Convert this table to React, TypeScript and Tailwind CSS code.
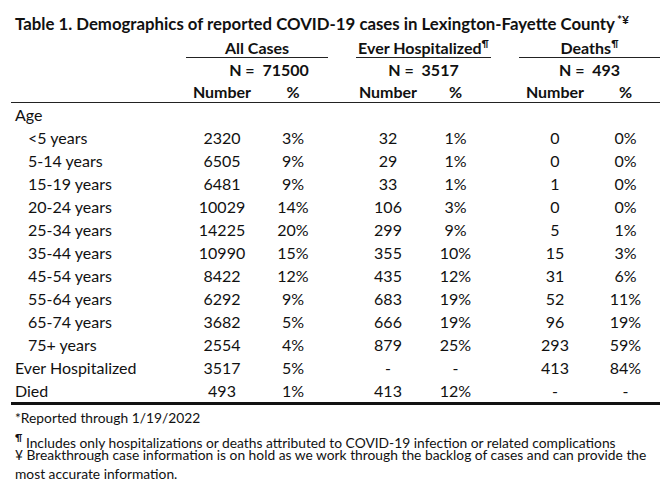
import React from "react";

type Row = {
  label: string;
  indent?: boolean;
  vals: [string, string, string, string, string, string];
};

const rows: Row[] = [
  { label: "<5 years", indent: true, vals: ["2320", "3%", "32", "1%", "0", "0%"] },
  { label: "5-14 years", indent: true, vals: ["6505", "9%", "29", "1%", "0", "0%"] },
  { label: "15-19 years", indent: true, vals: ["6481", "9%", "33", "1%", "1", "0%"] },
  { label: "20-24 years", indent: true, vals: ["10029", "14%", "106", "3%", "0", "0%"] },
  { label: "25-34 years", indent: true, vals: ["14225", "20%", "299", "9%", "5", "1%"] },
  { label: "35-44 years", indent: true, vals: ["10990", "15%", "355", "10%", "15", "3%"] },
  { label: "45-54 years", indent: true, vals: ["8422", "12%", "435", "12%", "31", "6%"] },
  { label: "55-64 years", indent: true, vals: ["6292", "9%", "683", "19%", "52", "11%"] },
  { label: "65-74 years", indent: true, vals: ["3682", "5%", "666", "19%", "96", "19%"] },
  { label: "75+ years", indent: true, vals: ["2554", "4%", "879", "25%", "293", "59%"] },
  { label: "Ever Hospitalized", vals: ["3517", "5%", "-", "-", "413", "84%"] },
  { label: "Died", vals: ["493", "1%", "413", "12%", "-", "-"] },
];

// label | all# | all% | gap | hosp# | hosp% | gap | deaths# | deaths%
const grid = "grid grid-cols-[175px_72px_70px_28px_64px_71px_28px_72px_69px]";

function Sup({ children }: { children: React.ReactNode }) {
  return (
    <span className="relative -top-[7px] text-[10px] font-bold leading-none">{children}</span>
  );
}

function DataRow({ row }: { row: Row }) {
  const [a, ap, h, hp, d, dp] = row.vals;
  return (
    <div className={`${grid} h-[23px] items-center`}>
      <div className={row.indent ? "pl-[17px]" : "pl-[4px]"}>{row.label}</div>
      <div className="text-center">{a}</div>
      <div className="text-center">{ap}</div>
      <div />
      <div className="text-center">{h}</div>
      <div className="text-center">{hp}</div>
      <div />
      <div className="text-center">{d}</div>
      <div className="text-center">{dp}</div>
    </div>
  );
}

export default function App() {
  return (
    <div className="w-[666px] h-[485px] bg-white text-[#111] font-['Lato',sans-serif] overflow-hidden">
      <div className="pl-[15px] pt-[14px] h-[38px] text-[16.8px] font-bold leading-[20px] whitespace-nowrap">
        Table 1. Demographics of reported COVID-19 cases in Lexington-Fayette County
        <span className="relative -top-[6px] ml-[2px] text-[12px] leading-none">*¥</span>
      </div>

      <div className="ml-[11px] w-[649px] text-[16px] leading-[20px]">
        {/* group headers */}
        <div className={`${grid} h-[20px] items-end font-bold`}>
          <div />
          <div className="col-span-2 text-center border-b border-[#222] leading-[19px]">All Cases</div>
          <div />
          <div className="col-span-2 text-center border-b border-[#222] leading-[19px] whitespace-nowrap">
            Ever Hospitalized<Sup>¶</Sup>
          </div>
          <div />
          <div className="col-span-2 text-center border-b border-[#222] leading-[19px]">
            Deaths<Sup>¶</Sup>
          </div>
        </div>
        <div className={`${grid} h-[23px] items-center font-bold`}>
          <div />
          <div className="col-span-2 text-center pl-[24px] whitespace-pre">N =  71500</div>
          <div />
          <div className="col-span-2 text-center whitespace-pre">N =  3517</div>
          <div />
          <div className="col-span-2 text-center whitespace-pre">N =  493</div>
        </div>
        <div className={`${grid} h-[22px] items-center font-bold border-b border-[#222]`}>
          <div />
          <div className="text-center">Number</div>
          <div className="text-center">%</div>
          <div />
          <div className="text-center">Number</div>
          <div className="text-center">%</div>
          <div />
          <div className="text-center">Number</div>
          <div className="text-center">%</div>
        </div>

        <div className="h-[23px] flex items-center pl-[4px]">Age</div>
        {rows.map((r) => (
          <DataRow key={r.label} row={r} />
        ))}
        <div className="h-[3px] bg-[#111]" />
      </div>

      <div className="pl-[15px] text-[13.8px] whitespace-nowrap">
        <div className="h-[25px] leading-[25px]">*Reported through 1/19/2022</div>
        <div className="mt-[7px] h-[12px] leading-[12px]">
          <Sup>¶</Sup> Includes only hospitalizations or deaths attributed to COVID-19 infection or related complications
        </div>
        <div className="h-[12px] leading-[12px]">
          ¥ Breakthrough case information is on hold as we work through the backlog of cases and can provide the
        </div>
        <div className="mt-[6px] h-[14px] leading-[14px]">most accurate information.</div>
      </div>
    </div>
  );
}
